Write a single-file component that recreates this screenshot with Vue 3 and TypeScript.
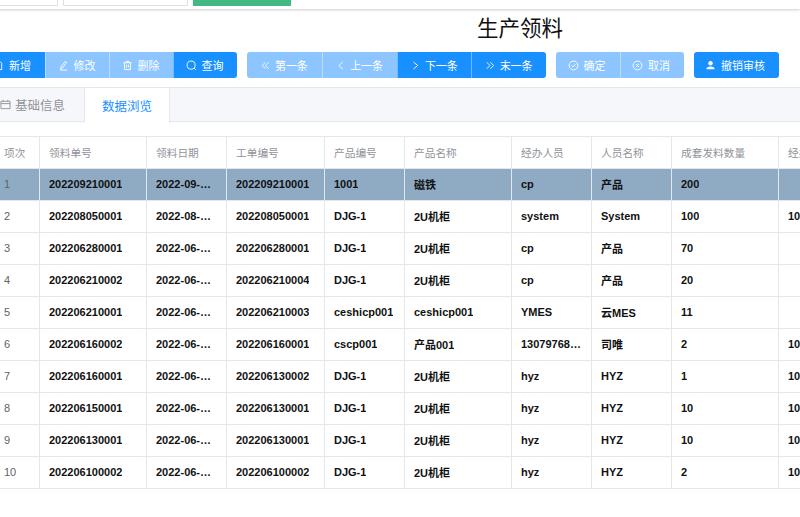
<script setup lang="ts">
type Btn = { label: string; icon: string; off?: boolean };

const groups: Btn[][] = [
  [
    { label: '新增', icon: 'add' },
    { label: '修改', icon: 'edit', off: true },
    { label: '删除', icon: 'del', off: true },
    { label: '查询', icon: 'search' },
  ],
  [
    { label: '第一条', icon: 'first', off: true },
    { label: '上一条', icon: 'prev', off: true },
    { label: '下一条', icon: 'next' },
    { label: '末一条', icon: 'last' },
  ],
  [
    { label: '确定', icon: 'ok', off: true },
    { label: '取消', icon: 'no', off: true },
  ],
  [{ label: '撤销审核', icon: 'user' }],
];

const heads = ['项次', '领料单号', '领料日期', '工单编号', '产品编号', '产品名称', '经办人员', '人员名称', '成套发料数量', '经办部门'];

const rows: string[][] = [
  ['1', '202209210001', '2022-09-21 00:00:00', '202209210001', '1001', '磁铁', 'cp', '产品', '200', ''],
  ['2', '202208050001', '2022-08-05 00:00:00', '202208050001', 'DJG-1', '2U机柜', 'system', 'System', '100', '10'],
  ['3', '202206280001', '2022-06-28 00:00:00', '202206280001', 'DJG-1', '2U机柜', 'cp', '产品', '70', ''],
  ['4', '202206210002', '2022-06-21 00:00:00', '202206210004', 'DJG-1', '2U机柜', 'cp', '产品', '20', ''],
  ['5', '202206210001', '2022-06-21 00:00:00', '202206210003', 'ceshicp001', 'ceshicp001', 'YMES', '云MES', '11', ''],
  ['6', '202206160002', '2022-06-16 00:00:00', '202206160001', 'cscp001', '产品001', '13079768000', '司唯', '2', '10'],
  ['7', '202206160001', '2022-06-16 00:00:00', '202206130002', 'DJG-1', '2U机柜', 'hyz', 'HYZ', '1', '10'],
  ['8', '202206150001', '2022-06-15 00:00:00', '202206130001', 'DJG-1', '2U机柜', 'hyz', 'HYZ', '10', '10'],
  ['9', '202206130001', '2022-06-13 00:00:00', '202206130001', 'DJG-1', '2U机柜', 'hyz', 'HYZ', '10', '10'],
  ['10', '202206100002', '2022-06-10 00:00:00', '202206100002', 'DJG-1', '2U机柜', 'hyz', 'HYZ', '2', '10'],
];
</script>

<template>
  <div class="page">
    <header class="topbar">
      <div class="field first"></div>
      <div class="field second"></div>
      <div class="green"></div>
    </header>

    <h1 class="title">生产领料</h1>

    <div class="toolbar">
      <div v-for="(group, g) in groups" :key="g" class="group">
        <button v-for="b in group" :key="b.label" class="btn" :class="{ off: b.off }">
          <svg class="ico" viewBox="0 0 12 12">
            <template v-if="b.icon === 'add'">
              <path d="M2.5 1.5h5l2 2v7h-7z" /><path d="M4.3 6.5h3.4M6 4.8v3.4" />
            </template>
            <template v-else-if="b.icon === 'edit'">
              <path d="M7.8 1.5l1.6 1.2-4.6 6.2-2 .9.3-2.2z" /><path d="M2 11h8" />
            </template>
            <template v-else-if="b.icon === 'del'">
              <path d="M1.5 3h9M4.5 3V1.5h3V3M2.8 3v7.5h6.4V3M5 5.2v3M7 5.2v3" />
            </template>
            <template v-else-if="b.icon === 'search'">
              <circle cx="5.6" cy="5.6" r="4.4" /><path d="M8.8 8.8l2 2" />
            </template>
            <template v-else-if="b.icon === 'first'">
              <path d="M7 2.5L3.5 6 7 9.5M10.5 2.5L7 6l3.5 3.5" />
            </template>
            <template v-else-if="b.icon === 'prev'">
              <path d="M9.5 2.2L5.2 6l4.3 3.8" />
            </template>
            <template v-else-if="b.icon === 'next'">
              <path d="M5 2.2L9.5 6 5 9.8" />
            </template>
            <template v-else-if="b.icon === 'last'">
              <path d="M3 2.5L6.5 6 3 9.5M7 2.5L10.5 6 7 9.5" />
            </template>
            <template v-else-if="b.icon === 'ok'">
              <circle cx="6" cy="6" r="4.8" /><path d="M3.8 6l1.6 1.6 2.8-3" />
            </template>
            <template v-else-if="b.icon === 'no'">
              <circle cx="6" cy="6" r="4.8" /><path d="M4.4 4.4l3.2 3.2M7.6 4.4L4.4 7.6" />
            </template>
            <template v-else>
              <circle class="fill" cx="6" cy="3.6" r="2.4" /><path class="fill" d="M1.5 10.2c0-2.2 1.6-3.2 4.5-3.2s4.5 1 4.5 3.2z" />
            </template>
          </svg>
          <span>{{ b.label }}</span>
        </button>
      </div>
    </div>

    <nav class="tabs">
      <div class="tab">
        <svg class="ico tab-ico" viewBox="0 0 12 12"><path d="M1 2.5h10v8H1zM1 5h10M3.5 1v2M8.5 1v2" /></svg>
        基础信息
      </div>
      <div class="tab active">数据浏览</div>
    </nav>

    <div class="table">
      <div class="row head">
        <div v-for="h in heads" :key="h" class="cell"><span class="clip">{{ h }}</span></div>
      </div>
      <div v-for="(r, i) in rows" :key="r[0]" class="row body" :class="{ selected: i === 0 }">
        <div v-for="(c, j) in r" :key="j" class="cell" :class="{ index: j === 0 }"><span class="clip">{{ c }}</span></div>
      </div>
    </div>
  </div>
</template>

<style scoped>
.page {
  width: 800px;
  height: 517px;
  overflow: hidden;
  background: #fff;
  font-family: "Liberation Sans", "Noto Sans CJK SC", sans-serif;
}
.topbar {
  height: 9px;
  display: flex;
  gap: 5px;
  align-items: flex-start;
  box-shadow: 0 1px 3px rgba(0, 0, 0, 0.2);
  overflow: hidden;
  margin-left: -10px;
}
.field {
  height: 5px;
  border: 1px solid #dcdfe6;
  border-top: none;
  background: #fff;
  box-sizing: content-box;
}
.first { width: 66px; }
.second { width: 123px; }
.green { width: 98px; height: 6px; background: #42b983; }
.title {
  margin: 0;
  height: 43px;
  padding-left: 477px;
  font-size: 21.5px;
  line-height: 35px;
  font-weight: 400;
  color: #111;
  font-family: "Noto Sans CJK SC", sans-serif;
}
.toolbar {
  display: flex;
  height: 26px;
  margin-left: -19px;
}
.group { display: flex; margin-right: 9.5px; }
.group:first-child { margin-right: 10px; }
.group:nth-child(3) { margin-right: 10.5px; }
.btn {
  width: 64px;
  height: 26px;
  padding: 0 2px 0 0;
  display: flex;
  align-items: center;
  justify-content: center;
  gap: 5px;
  border: none;
  border-left: 1px solid rgba(255, 255, 255, 0.4);
  background: #1890ff;
  color: #fff;
  font-size: 11px;
  font-family: "Noto Sans CJK SC", sans-serif;
}
.btn:first-child { border-left: none; border-radius: 3px 0 0 3px; }
.btn:last-child { border-radius: 0 3px 3px 0; }
.btn:only-child { border-radius: 3px; width: 85px; padding-right: 3px; }
.btn.off { background: #8cc5ff; }
.group:nth-child(2) .btn { width: 74.75px; }
.ico {
  width: 11px;
  height: 11px;
  flex: none;
  fill: none;
  stroke: currentColor;
  stroke-width: 1;
}
.ico .fill { fill: currentColor; stroke: none; }
.tabs {
  display: flex;
  height: 35px;
  box-sizing: border-box;
  margin-top: 9px;
  border-top: 1px solid #e4e7ed;
  border-bottom: 1px solid #e4e7ed;
  background: #f5f7fa;
  margin-left: -10px;
}
.tab {
  width: 94px;
  display: flex;
  align-items: center;
  justify-content: flex-end;
  gap: 4px;
  padding-right: 19px;
  box-sizing: border-box;
  font-size: 12.5px;
  color: #909399;
  font-family: "Noto Sans CJK SC", sans-serif;
}
.tab-ico { width: 11px; height: 11px; }
.tab.active {
  width: 86px;
  height: 35px;
  justify-content: center;
  padding: 0;
  background: #fff;
  color: #1890ff;
  border-left: 1px solid #e4e7ed;
  border-right: 1px solid #e4e7ed;
}
.table {
  margin-top: 14px;
  margin-left: -6px;
  width: 900px;
  border-top: 1px solid #e4e7ed;
}
.row {
  display: grid;
  grid-template-columns: 46px 107px 80px 98px 80px 107px 80px 80px 107px 110px;
  height: 32px;
  box-sizing: border-box;
  border-bottom: 1px solid #e4e7ed;
  font-size: 11px;
  font-weight: 700;
  color: #111;
}
.head {
  color: #909399;
  font-weight: 400;
  font-family: "Noto Sans CJK SC", sans-serif;
  font-size: 10.7px;
}
.selected { background: #8fabc4; }
.cell {
  display: flex;
  align-items: center;
  padding: 0 10px 0 9px;
  min-width: 0;
  border-right: 1px solid #e4e7ed;
  white-space: nowrap;
}
.body .cell { padding-bottom: 2px; }
.clip { overflow: hidden; text-overflow: ellipsis; }
.cell.index, .head .cell:first-child { padding-left: 10px; }
.index { font-weight: 400; color: #606266; }
</style>
<style>
html, body { margin: 0; overflow: hidden; }
</style>
